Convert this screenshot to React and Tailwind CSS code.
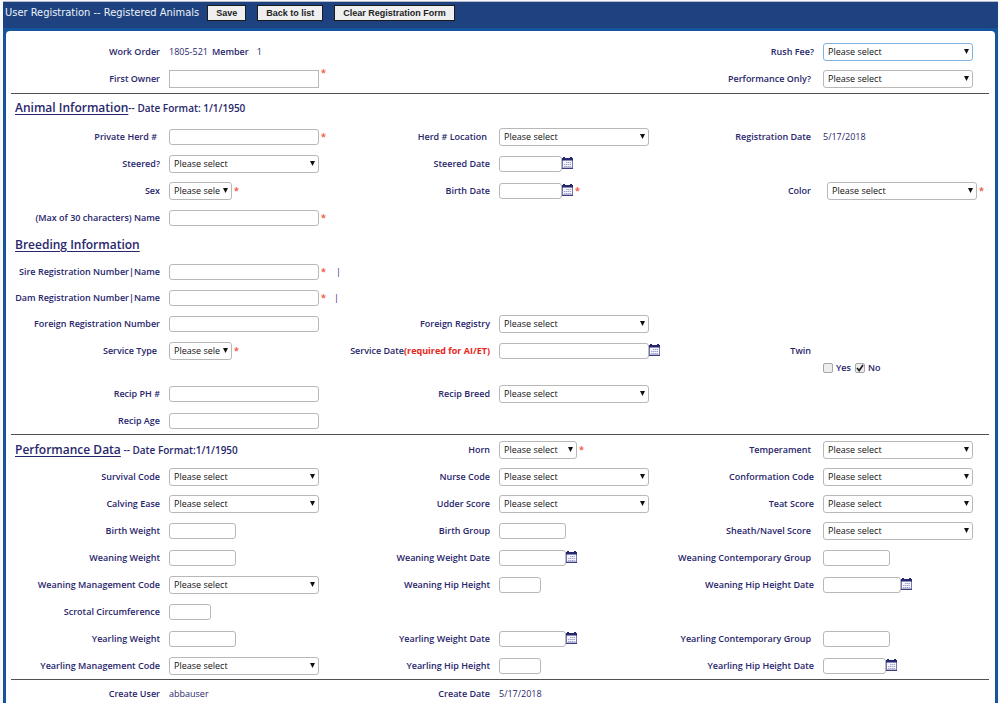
import { useState } from "react";
import clsx from "clsx";

const toId = (text) => text.toLowerCase().replace(/[^a-z0-9]+/g, "-");

const CalendarIcon = () => (
  <svg width="11" height="12" viewBox="0 0 11 12" aria-hidden="true">
    <rect x="0.5" y="2.5" width="10" height="8.5" fill="#f4f4fb" stroke="#7778ad" />
    <rect x="0" y="1" width="11" height="2.5" fill="#25276f" />
    <rect x="1" y="0" width="2" height="2" fill="#25276f" />
    <rect x="8" y="0" width="2" height="2" fill="#25276f" />
    <path d="M4 5.5h5M2 7.5h7M2 9.5h7" stroke="#a3a4cc" strokeDasharray="1.5 0.5" />
    <path d="M0 11.5h11" stroke="#3b3d80" />
  </svg>
);

const Star = ({ raised }) => (
  <span
    className={clsx(
      "ml-0.5 text-[9px] leading-3 font-bold text-[#f0604c]",
      raised && "self-start pt-0.5"
    )}
  >
    *
  </span>
);

const Label = ({ text, note, trailing }) => (
  <label
    htmlFor={toId(text)}
    className={clsx(
      "flex h-[27px] min-w-0 items-center justify-end text-right font-semibold whitespace-nowrap",
      trailing && "pr-[3px]"
    )}
  >
    {text}
    {note && <span className="font-bold text-[#e8261c]">{note}</span>}
  </label>
);

const Select = ({ id, width = "w-[150px]", focused }) => (
  <span className={clsx("relative block h-[18px] shrink-0", width)}>
    <select
      id={id}
      className={clsx(
        "block h-full w-full appearance-none overflow-hidden rounded-[3px] border bg-white pr-[11px] pl-1 text-[9px] leading-4 text-[#111] outline-none",
        focused ? "border-[#7db4e2]" : "border-[#b8b8b8]"
      )}
    >
      <option>Please select</option>
    </select>
    <svg
      className="pointer-events-none absolute top-1.5 right-1"
      width="5"
      height="5"
      viewBox="0 0 5 5"
      aria-hidden="true"
    >
      <path d="M0 0h5L2.5 5z" fill="#111" />
    </svg>
  </span>
);

const Input = ({ id, width = "w-[150px]", square }) => (
  <input
    id={id}
    type="text"
    className={clsx(
      "shrink-0 border border-[#b8b8b8] bg-white px-1 text-[9px] outline-none",
      square ? "h-[18px]" : "h-4 rounded-[3px]",
      width
    )}
  />
);

const Field = ({ label, note, trailing, type = "input", width, square, focused, required, raised, date, indent, extra, value }) => {
  const id = toId(label);
  return (
    <>
      <Label text={label} note={note} trailing={trailing} />
      <div className={clsx("flex h-[27px] min-w-0 items-center", indent && "pl-1")}>
        {type === "select" && <Select id={id} width={width} focused={focused} />}
        {type === "input" && <Input id={id} width={width} square={square} />}
        {type === "text" && <output id={id}>{value}</output>}
        {date && (
          <button type="button" aria-label={`Pick ${label}`} className="mb-0.5 shrink-0">
            <CalendarIcon />
          </button>
        )}
        {required && <Star raised={raised} />}
        {extra}
      </div>
    </>
  );
};

const Row = ({ className, children }) => (
  <div
    className={clsx(
      "grid grid-cols-[154fr_168fr_144fr_165fr_141fr_172fr] gap-x-[9px]",
      className || "h-[27px]"
    )}
  >
    {children}
  </div>
);

const Blank = () => <div className="col-span-2" />;

const Rule = () => <hr className="mr-1.5 ml-[5px] border-t border-[#505050]" />;

const Heading = ({ title, note }) => (
  <div className="col-span-2 flex h-[27px] items-center pl-[9px] whitespace-nowrap">
    <h2 className="text-[12px] font-semibold underline decoration-1 underline-offset-2">{title}</h2>
    {note && <span className="pt-px text-[10px] font-semibold whitespace-pre">{note}</span>}
  </div>
);

const Checkbox = ({ label, checked, onChange }) => (
  <label className="flex items-center gap-[3px] font-semibold">
    <span className="relative block size-2.5">
      <input
        type="checkbox"
        checked={checked}
        onChange={onChange}
        className="peer block size-full appearance-none rounded-[2px] border border-[#a5a5a5] bg-[#eeeeee]"
      />
      <svg
        className="pointer-events-none absolute inset-0 hidden peer-checked:block"
        viewBox="0 0 10 10"
        aria-hidden="true"
      >
        <path d="M2 5l2.2 2.5L8 2" fill="none" stroke="#222" strokeWidth="1.7" />
      </svg>
    </span>
    {label}
  </label>
);

const HeaderButton = ({ children }) => (
  <button
    type="button"
    className="h-4 border border-[#1b1b1b] bg-[#efefef] px-2 font-['Liberation_Sans',sans-serif] text-[9px] leading-none font-bold text-[#222]"
  >
    {children}
  </button>
);

export default function App() {
  const [twin, setTwin] = useState(false);

  return (
    <div className="min-h-screen bg-[#f8f9fc] pt-px pr-0.5 pl-[3px] font-['Open_Sans','Noto_Sans',sans-serif] text-[9px] leading-3 text-[#28266c]">
      <div className="min-h-[calc(100vh-1px)] border-t border-[#b9bcc6] bg-[#16549c]">
        <header className="flex h-[26px] items-start bg-[#1d427f] pt-[3px] pl-0.5">
          <h1 className="mr-2 font-['DejaVu_Sans_Condensed','DejaVu_Sans',sans-serif] text-[11px] leading-4 text-[#eef2fb]">
            User Registration -- Registered Animals
          </h1>
          <div className="flex gap-[11px]">
            <HeaderButton>Save</HeaderButton>
            <HeaderButton>Back to list</HeaderButton>
            <HeaderButton>Clear Registration Form</HeaderButton>
          </div>
        </header>

        <form className="mx-[3px] mt-[3px] min-h-[calc(100vh-31px)] rounded-t-[4px] bg-white pt-[7px]">
          <section className="pb-px">
            <Row>
              <Field
                label="Work Order"
                type="text"
                value="1805-521"
                extra={
                  <>
                    <label htmlFor="member" className="mr-2 ml-1 font-semibold">
                      Member
                    </label>
                    <output id="member">1</output>
                  </>
                }
              />
              <Blank />
              <Field label="Rush Fee?" type="select" focused />
            </Row>
            <Row>
              <Field label="First Owner" square required raised />
              <Blank />
              <Field label="Performance Only?" type="select" trailing />
            </Row>
          </section>

          <Rule />

          <section>
            <Heading title="Animal Information" note="-- Date Format: 1/1/1950" />
            <div className="pt-0.5">
              <Row>
                <Field label="Private Herd #" trailing required />
                <Field label="Herd # Location" type="select" trailing />
                <Field label="Registration Date" type="text" value="5/17/2018" trailing />
              </Row>
              <Row>
                <Field label="Steered?" type="select" />
                <Field label="Steered Date" width="w-[63px]" date />
              </Row>
              <Row>
                <Field label="Sex" type="select" width="w-[63px]" required />
                <Field label="Birth Date" width="w-[63px]" date required />
                <Field label="Color" type="select" trailing indent required />
              </Row>
              <Row>
                <Field label="(Max of 30 characters) Name" required />
              </Row>
            </div>
          </section>

          <section>
            <Heading title="Breeding Information" />
            <Row className="h-[26px]">
              <Field label="Sire Registration Number|Name" required extra={<span className="ml-2.5">|</span>} />
            </Row>
            <Row className="h-[26px]">
              <Field label="Dam Registration Number|Name" required extra={<span className="ml-2">|</span>} />
            </Row>
            <Row>
              <Field label="Foreign Registration Number" />
              <Field label="Foreign Registry" type="select" />
            </Row>
            <Row className="h-[43px]">
              <Field label="Service Type" type="select" width="w-[63px]" trailing required />
              <Field label="Service Date" note="(required for AI/ET)" date />
              <div className="flex h-[27px] items-center justify-end pr-[3px] font-semibold">Twin</div>
              <div role="group" aria-label="Twin" className="flex items-start gap-1 pt-[25px]">
                <Checkbox label="Yes" checked={twin} onChange={() => setTwin(true)} />
                <Checkbox label="No" checked={!twin} onChange={() => setTwin(false)} />
              </div>
            </Row>
            <Row>
              <Field label="Recip PH #" />
              <Field label="Recip Breed" type="select" />
            </Row>
            <Row>
              <Field label="Recip Age" />
            </Row>
          </section>

          <Rule />

          <section className="pt-px">
            <Row>
              <Heading title="Performance Data" note=" -- Date Format:1/1/1950" />
              <Field label="Horn" type="select" width="w-[78px]" required />
              <Field label="Temperament" type="select" trailing />
            </Row>
            <Row>
              <Field label="Survival Code" type="select" />
              <Field label="Nurse Code" type="select" />
              <Field label="Conformation Code" type="select" />
            </Row>
            <Row>
              <Field label="Calving Ease" type="select" />
              <Field label="Udder Score" type="select" />
              <Field label="Teat Score" type="select" />
            </Row>
            <Row>
              <Field label="Birth Weight" width="w-[67px]" />
              <Field label="Birth Group" width="w-[67px]" />
              <Field label="Sheath/Navel Score" type="select" trailing />
            </Row>
            <Row>
              <Field label="Weaning Weight" width="w-[67px]" />
              <Field label="Weaning Weight Date" width="w-[67px]" date />
              <Field label="Weaning Contemporary Group" width="w-[67px]" trailing />
            </Row>
            <Row>
              <Field label="Weaning Management Code" type="select" />
              <Field label="Weaning Hip Height" width="w-[42px]" />
              <Field label="Weaning Hip Height Date" width="w-[78px]" date />
            </Row>
            <Row>
              <Field label="Scrotal Circumference" width="w-[42px]" />
            </Row>
            <Row>
              <Field label="Yearling Weight" width="w-[67px]" />
              <Field label="Yearling Weight Date" width="w-[67px]" date />
              <Field label="Yearling Contemporary Group" width="w-[67px]" trailing />
            </Row>
            <Row>
              <Field label="Yearling Management Code" type="select" />
              <Field label="Yearling Hip Height" width="w-[42px]" />
              <Field label="Yearling Hip Height Date" width="w-[63px]" date />
            </Row>
          </section>

          <Rule />

          <Row className="h-[23px]">
            <Field label="Create User" type="text" value="abbauser" />
            <Field label="Create Date" type="text" value="5/17/2018" />
          </Row>
        </form>
      </div>
    </div>
  );
}
